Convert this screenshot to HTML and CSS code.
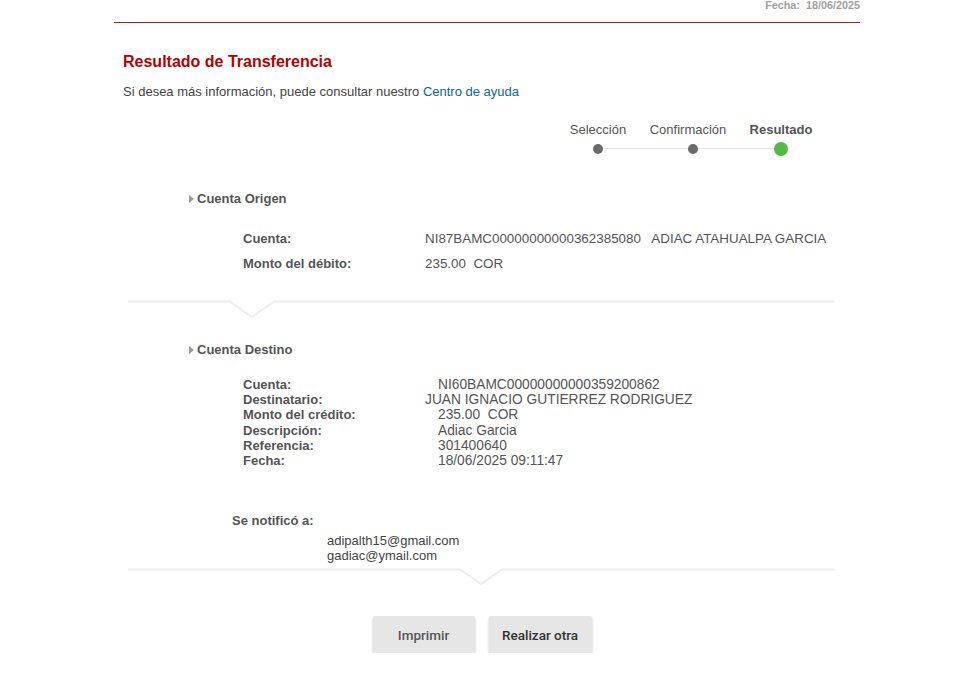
FILE: index.html
```html
<!DOCTYPE html>
<html lang="es">
<head>
<meta charset="utf-8">
<title>Resultado de Transferencia</title>
<link rel="stylesheet" href="styles.css">
</head>
<body>
<div class="page">
  <header class="topbar">
    <span class="fecha">Fecha:&nbsp; 18/06/2025</span>
  </header>

  <h1 class="title">Resultado de Transferencia</h1>
  <p class="subtitle">Si desea más información, puede consultar nuestro <a href="#" class="link">Centro de ayuda</a></p>

  <div class="stepper">
    <div class="step"><span class="step-label">Selección</span><span class="dot"></span></div>
    <div class="step"><span class="step-label shift">Confirmación</span><span class="dot"></span></div>
    <div class="step active"><span class="step-label">Resultado</span><span class="dot"></span></div>
  </div>

  <section class="block origen">
    <h2 class="block-title"><span class="caret"></span>Cuenta Origen</h2>
    <div class="rows rows-wide">
      <div class="row"><span class="lbl">Cuenta:</span><span class="val">NI87BAMC00000000000362385080&nbsp;&nbsp; ADIAC ATAHUALPA GARCIA</span></div>
      <div class="row"><span class="lbl">Monto del débito:</span><span class="val">235.00&nbsp; COR</span></div>
    </div>
  </section>

  <svg class="sep" width="707" height="20" viewBox="0 0 707 20">
    <polyline points="0,1.5 102,1.5 124,17 146,1.5 707,1.5" fill="none" stroke="#eeeeee" stroke-width="2"/>
  </svg>

  <section class="block destino">
    <h2 class="block-title"><span class="caret"></span>Cuenta Destino</h2>
    <div class="rows rows-tight">
      <div class="row"><span class="lbl">Cuenta:</span><span class="val pad">NI60BAMC00000000000359200862</span></div>
      <div class="row"><span class="lbl">Destinatario:</span><span class="val">JUAN IGNACIO GUTIERREZ RODRIGUEZ</span></div>
      <div class="row"><span class="lbl">Monto del crédito:</span><span class="val pad">235.00&nbsp; COR</span></div>
      <div class="row"><span class="lbl">Descripción:</span><span class="val pad">Adiac Garcia</span></div>
      <div class="row"><span class="lbl">Referencia:</span><span class="val pad">301400640</span></div>
      <div class="row"><span class="lbl">Fecha:</span><span class="val pad">18/06/2025 09:11:47</span></div>
    </div>

    <div class="notify">
      <div class="notify-lbl">Se notificó a:</div>
      <div class="emails">
        <div>adipalth15@gmail.com</div>
        <div>gadiac@ymail.com</div>
      </div>
    </div>
  </section>

  <svg class="sep sep2" width="707" height="20" viewBox="0 0 707 20">
    <polyline points="0,1.5 332,1.5 353,16 374,1.5 707,1.5" fill="none" stroke="#eeeeee" stroke-width="2"/>
  </svg>

  <div class="actions">
    <button class="btn btn-print">Imprimir</button>
    <button class="btn btn-other">Realizar otra</button>
  </div>
</div>
</body>
</html>
```

FILE: styles.css
```css
* { box-sizing: border-box; }
html, body { margin: 0; padding: 0; background: #fff; }
body {
  font-family: "Liberation Sans", Arial, sans-serif;
  color: #555;
  font-size: 13px;
}
.page {
  width: 746px;
  margin: 0 0 0 114px;
}
.topbar {
  height: 23px;
  border-bottom: 1px solid #a82222;
  display: flex;
  justify-content: flex-end;
  align-items: flex-start;
}
.fecha {
  font-size: 10.8px;
  font-weight: bold;
  color: #a0a0a0;
  line-height: 11px;
  margin-top: 0;
}
.title {
  margin: 30px 0 0 9px;
  font-size: 16px;
  line-height: 18px;
  font-weight: bold;
  color: #b80000;
}
.subtitle {
  margin: 13px 0 0 9px;
  font-size: 13px;
  line-height: 15px;
  color: #444;
}
.link { color: #0b64a8; text-decoration: none; }

.stepper {
  display: flex;
  justify-content: flex-end;
  margin: 23px 0 0 0;
  padding-right: 44px;
}
.step {
  display: flex;
  flex-direction: column;
  align-items: center;
  position: relative;
}
.step:nth-child(1) { width: 80px; }
.step:nth-child(2) { width: 80px; margin-left: 15px; }
.step:nth-child(3) { width: 70px; margin-left: 13px; }
.step-label {
  font-size: 13px;
  line-height: 15px;
  color: #555;
  white-space: nowrap;
}
.step-label.shift { margin-right: 10px; }
.step.active .step-label { font-weight: bold; color: #555; }
.dot {
  width: 10px;
  height: 10px;
  border-radius: 50%;
  background: #6b6b6b;
  margin-top: 7px;
  position: relative;
  z-index: 1;
}
.step.active .dot {
  width: 14px;
  height: 14px;
  background: #55b946;
  margin-top: 5px;
}
.step:not(:last-child)::after {
  content: "";
  position: absolute;
  left: 50%;
  top: 26px;
  height: 1px;
  background: #e4e4e4;
}
.step:nth-child(1)::after { width: 95px; }
.step:nth-child(2)::after { width: 88px; }

.block-title {
  margin: 0;
  font-size: 13px;
  line-height: 15px;
  font-weight: bold;
  color: #555;
  display: flex;
  align-items: center;
  padding-left: 75px;
}
.caret {
  width: 0; height: 0;
  border-top: 4px solid transparent;
  border-bottom: 4px solid transparent;
  border-left: 5px solid #999;
  margin-right: 3px;
}
.origen { margin-top: 35px; }
.rows { padding-left: 129px; }
.row { display: flex; }
.lbl { width: 182px; font-weight: bold; color: #555; font-size: 13px; }
.val { color: #555; }
.rows-wide { margin-top: 20px; }
.rows-wide .row { line-height: 25px; }
.rows-wide .val { font-size: 13.4px; }

.sep { display: block; margin: 24px 0 0 14px; }

.destino { margin-top: 22px; }
.rows-tight { margin-top: 20px; }
.rows-tight .row { line-height: 15.2px; }
.rows-tight .val { font-size: 13.75px; }
.val.pad { padding-left: 13px; }

.notify { margin-top: 45px; padding-left: 118px; }
.notify-lbl { font-weight: bold; line-height: 15px; }
.emails { margin-top: 5px; padding-left: 95px; line-height: 15px; color: #444; }
.sep2 { margin-top: 5px; }

.actions {
  display: flex;
  justify-content: center;
  gap: 14px;
  margin-top: 28px;
  padding-right: 10px;
}
.btn {
  font-family: Roboto, "Liberation Sans", sans-serif;
  font-weight: 500;
  font-size: 13.5px;
  color: #555;
  background: #e6e6e6;
  border: none;
  border-radius: 2px;
  height: 37px;
  box-shadow: 0 2px 3px rgba(0,0,0,0.2);
  cursor: pointer;
}
.btn-print { width: 102px; }
.btn-other { width: 103px; color: #333; }
```
